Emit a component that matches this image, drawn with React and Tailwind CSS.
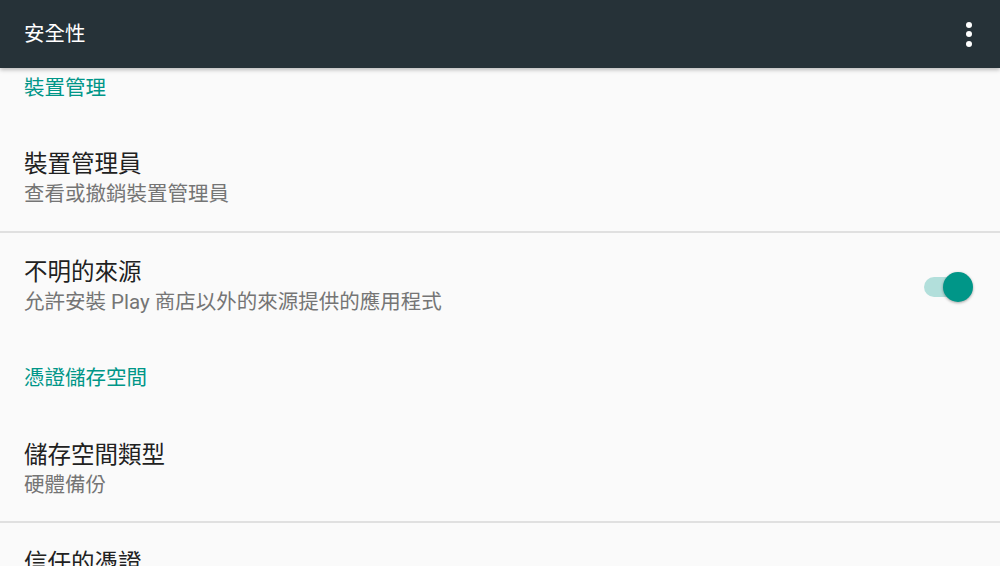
const font = { fontFamily: '"Roboto", "Noto Sans CJK TC", sans-serif' };

function Subheader({ children, className }) {
    return (
        <div className={`shrink-0 px-6 flex items-center text-[20.5px] text-[#009688] ${className}`}>
            {children}
        </div>
    );
}

function Item({ title, summary, className, children }) {
    return (
        <div className={`shrink-0 flex items-center px-6 ${className}`}>
            <div className="flex-1 flex flex-col">
                <div className="text-[23.5px] leading-[30px] text-[#212121]">{title}</div>
                <div className="text-[20.5px] leading-[30px] text-[#757575]">{summary}</div>
            </div>
            {children}
        </div>
    );
}

function Toggle() {
    return (
        <div className="relative w-[52px] h-[34px] mr-[2px] flex items-center">
            <div className="ml-[2px] w-[40px] h-[20px] rounded-full bg-[#b2dfdb]" />
            <div className="absolute right-[1px] top-[2px] w-[30px] h-[30px] rounded-full bg-[#009688] shadow-[0_1px_3px_rgba(0,0,0,0.35)]" />
        </div>
    );
}

export default function App() {
    return (
        <div style={font} className="w-[1000px] h-[566px] overflow-hidden bg-[#fafafa] flex flex-col">
            <div className="relative z-10 h-[68px] shrink-0 bg-[#263238] flex items-center justify-between pl-6 pr-[28px] shadow-[0_2px_4px_rgba(0,0,0,0.25)]">
                <div className="text-[20.5px] text-white">安全性</div>
                <div className="flex flex-col gap-[3.5px] items-center">
                    <span className="w-[6px] h-[6px] rounded-full bg-white" />
                    <span className="w-[6px] h-[6px] rounded-full bg-white" />
                    <span className="w-[6px] h-[6px] rounded-full bg-white" />
                </div>
            </div>
            <Subheader className="h-[40px]">裝置管理</Subheader>
            <Item title="裝置管理員" summary="查看或撤銷裝置管理員" className="h-[123px] pt-[19px]" />
            <div className="shrink-0 h-[2px] bg-[#e0e0e0]" />
            <Item title="不明的來源" summary="允許安裝 Play 商店以外的來源提供的應用程式" className="h-[108px]">
                <Toggle />
            </Item>
            <Subheader className="h-[77px] pb-[3px]">憑證儲存空間</Subheader>
            <Item title="儲存空間類型" summary="硬體備份" className="h-[103px]" />
            <div className="shrink-0 h-[2px] bg-[#e0e0e0]" />
            <Item title="信任的憑證" summary="顯示信任的 CA 憑證" className="h-[108px] pt-[2px]" />
        </div>
    );
}
